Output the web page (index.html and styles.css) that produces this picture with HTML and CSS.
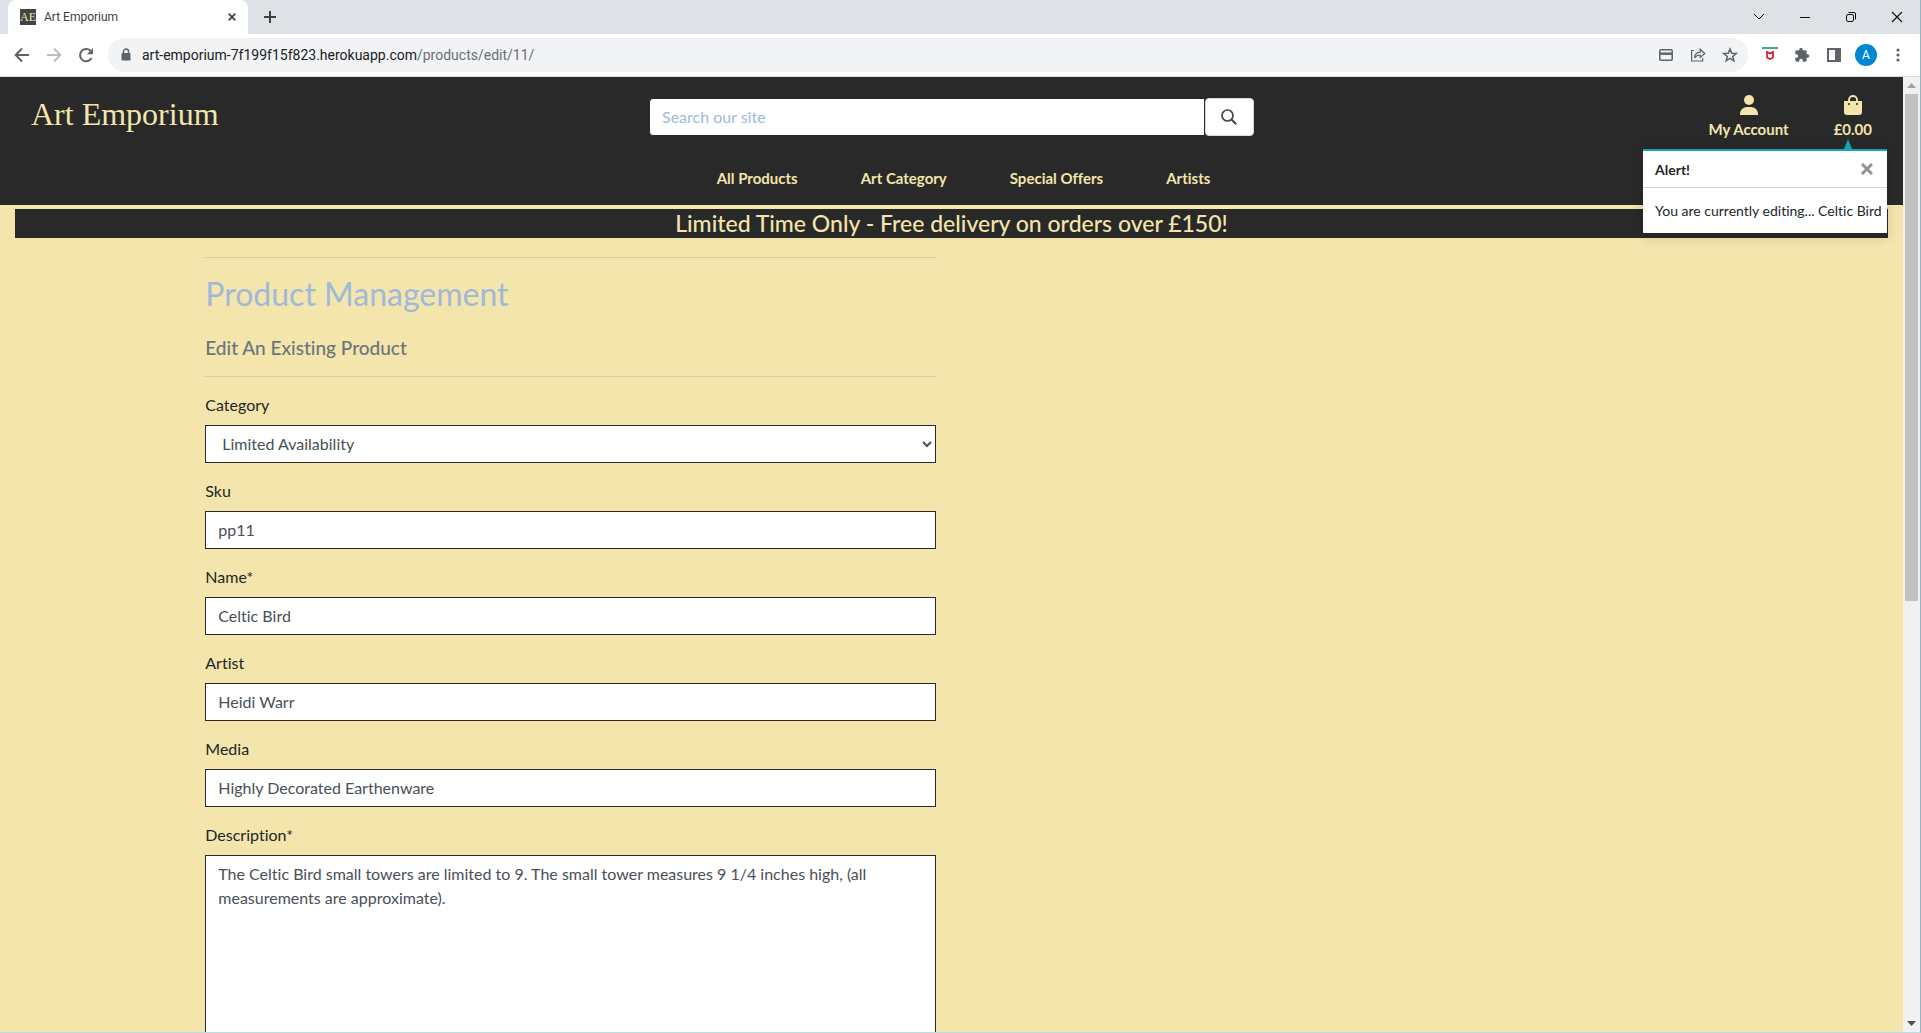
FILE: index.html
```html
<!DOCTYPE html>
<html lang="en">
<head>
<meta charset="utf-8">
<title>Art Emporium</title>
<link rel="stylesheet" href="styles.css">
</head>
<body>
<div class="browser">
  <div class="tab-strip">
    <div class="tab">
      <svg class="favicon" viewBox="0 0 16 16" aria-hidden="true"><rect width="16" height="16" fill="#444"/><text x="8" y="12" text-anchor="middle" class="favicon-text">AE</text></svg>
      <span class="tab-title">Art Emporium</span>
      <button class="icon-btn tab-close" aria-label="Close tab"><svg width="8" height="8" viewBox="0 0 8 8"><path d="M.7.7l6.6 6.6M7.3.7L.7 7.3" stroke="#3c4043" stroke-width="1.7"/></svg></button>
    </div>
    <button class="icon-btn new-tab" aria-label="New tab"><svg width="12" height="12" viewBox="0 0 12 12"><path d="M6 0v12M0 6h12" stroke="#3c4043" stroke-width="2"/></svg></button>
    <div class="window-controls">
      <button class="icon-btn" aria-label="Search tabs"><svg width="12" height="12" viewBox="0 0 12 12"><path d="M1 3l5 5 5-5" fill="none" stroke="#111"/></svg></button>
      <button class="icon-btn" aria-label="Minimise"><svg width="12" height="12" viewBox="0 0 12 12"><path d="M1 6.500h10" stroke="#111"/></svg></button>
      <button class="icon-btn" aria-label="Restore"><svg width="12" height="12" viewBox="0 0 12 12" fill="none" stroke="#111"><rect x="1.500" y="3.500" width="7" height="7" rx="1.500"/><path d="M3.500 1.500H9a1.500 1.500 0 0 1 1.500 1.500v5.500"/></svg></button>
      <button class="icon-btn" aria-label="Close"><svg width="12" height="12" viewBox="0 0 12 12"><path d="M1 1l10 10M11 1L1 11" stroke="#111" stroke-width="1.200"/></svg></button>
    </div>
  </div>
  <div class="toolbar">
    <button class="icon-btn" aria-label="Back"><svg width="16" height="16" viewBox="0 0 16 16" fill="none" stroke="#5f6368" stroke-width="2"><path d="M15 8H2M8 1.500L1.700 8 8 14.500"/></svg></button>
    <button class="icon-btn" aria-label="Forward"><svg width="16" height="16" viewBox="0 0 16 16" fill="none" stroke="#bbbdbf" stroke-width="2"><path d="M1 8h13M8 1.500L14.300 8 8 14.500"/></svg></button>
    <button class="icon-btn" aria-label="Reload"><svg width="16" height="16" viewBox="0 0 16 16"><path d="M13.500 11A6.100 6.100 0 1 1 12.400 3.800" fill="none" stroke="#5f6368" stroke-width="2"/><path d="M15 1v6.200H8.800z" fill="#5f6368"/></svg></button>
    <div class="address">
      <svg width="10" height="14" viewBox="0 0 10 14" aria-hidden="true"><rect x="0.500" y="5" width="9" height="7.500" rx="1" fill="#5f6368"/><path d="M2.500 5V3.500a2.500 2.500 0 0 1 5 0V5" fill="none" stroke="#5f6368" stroke-width="1.400"/></svg>
      <span class="url">art-emporium-7f199f15f823.herokuapp.com<span class="url-path">/products/edit/11/</span></span>
      <div class="address-icons">
        <button class="icon-btn" aria-label="Payment"><svg width="16" height="16" viewBox="0 0 16 16"><rect x="1.800" y="2.800" width="12.400" height="10.400" rx="1" fill="none" stroke="#5f6368" stroke-width="1.500"/><path d="M2 6.700h12" stroke="#5f6368" stroke-width="2.500"/></svg></button>
        <button class="icon-btn" aria-label="Share"><svg width="16" height="16" viewBox="0 0 16 16" fill="none" stroke="#5f6368" stroke-width="1.200"><path d="M4 3.500H1.600V14h11v-3M4.500 11c.3-4 2.300-5.700 5.700-5.900V2.200L14.800 6.500 10.200 10.500V8c-2.700 0-4.300.8-5.700 3z"/></svg></button>
        <button class="icon-btn" aria-label="Bookmark"><svg width="16" height="16" viewBox="0 0 16 16"><path d="M8 2l1.700 4.200 4.500.3-3.500 2.900 1.200 4.400L8 11.400l-3.900 2.400 1.200-4.400L1.800 6.500l4.500-.3z" fill="none" stroke="#5f6368" stroke-width="1.500"/></svg></button>
      </div>
    </div>
    <div class="extensions">
      <button class="icon-btn" aria-label="Web protection"><svg width="16" height="16" viewBox="0 0 16 16"><path d="M0 1h16" stroke="#3fa884" stroke-width="2"/><path d="M5 5v5.500l3 1.600 3-1.600V5L8 6.600z" fill="none" stroke="#c9202b" stroke-width="1.700"/></svg></button>
      <button class="icon-btn" aria-label="Extensions"><svg width="16" height="16" viewBox="0 0 24 24" fill="#5f6368"><path d="M20.500 11H19V7a2 2 0 0 0-2-2h-4V3.500a2.500 2.500 0 0 0-5 0V5H4a2 2 0 0 0-2 2v3.800h1.500a2.700 2.700 0 0 1 0 5.400H2V20a2 2 0 0 0 2 2h3.800v-1.500a2.700 2.700 0 0 1 5.400 0V22H17a2 2 0 0 0 2-2v-4h1.500a2.500 2.500 0 0 0 0-5z"/></svg></button>
      <button class="icon-btn" aria-label="Side panel"><svg width="16" height="16" viewBox="0 0 16 16"><path d="M1 1h14v14H1zM3 3v10h6V3z" fill="#5f6368" fill-rule="evenodd"/></svg></button>
      <button class="avatar" aria-label="Profile">A</button>
      <button class="icon-btn" aria-label="Menu"><svg width="16" height="16" viewBox="0 0 16 16" fill="#5f6368"><circle cx="8" cy="3" r="1.600"/><circle cx="8" cy="8" r="1.600"/><circle cx="8" cy="13" r="1.600"/></svg></button>
    </div>
  </div>
  <div class="viewport">
    <div class="page">
      <header class="site-header">
        <div class="header-top">
          <a class="logo" href="#">Art Emporium</a>
          <form class="search">
            <input type="text" placeholder="Search our site" aria-label="Search our site">
            <button type="button" aria-label="Search"><svg width="16" height="16" viewBox="0 0 16 16" fill="none" stroke="#3d4852"><circle cx="6.500" cy="6.500" r="5.500" stroke-width="1.700"/><path d="M10.300 10.300l4.900 4.900" stroke-width="2"/></svg></button>
          </form>
          <div class="account-links">
            <a href="#"><svg width="18" height="20" viewBox="0 0 18 20" fill="currentColor"><circle cx="9" cy="5" r="5"/><path d="M0 20v-1.500a7 6.500 0 0 1 7-6.500h4a7 6.500 0 0 1 7 6.500V20z"/></svg>My Account</a>
            <a class="bag-link" href="#"><svg width="18" height="20" viewBox="0 0 18 20"><path d="M5 8V5a4 4 0 0 1 8 0v3" fill="none" stroke="currentColor" stroke-width="1.900"/><path d="M0 6h18v11a3 3 0 0 1-3 3H3a3 3 0 0 1-3-3z" fill="currentColor"/><circle cx="5" cy="9" r="1" fill="#292929"/><circle cx="13" cy="9" r="1" fill="#292929"/></svg>£0.00</a>
          </div>
        </div>
        <nav class="main-nav">
          <a href="#">All Products</a><a href="#">Art Category</a><a href="#">Special Offers</a><a href="#">Artists</a>
        </nav>
      </header>
      <h4 class="banner">Limited Time Only - Free delivery on orders over £150!</h4>
      <section class="toast" role="alert">
        <div class="toast-head"><strong>Alert!</strong><button class="icon-btn" aria-label="Close alert"><svg width="12" height="12" viewBox="0 0 12 12"><path d="M1 1l10 10M11 1L1 11" stroke="#919395" stroke-width="3"/></svg></button></div>
        <p>You are currently editing... Celtic Bird</p>
      </section>
      <main class="container">
        <div class="column">
          <hr>
          <h2>Product Management</h2>
          <h5>Edit An Existing Product</h5>
          <hr>
          <form class="product-form">
            <div class="field"><label for="category">Category</label><select id="category"><option>Limited Availability</option></select></div>
            <div class="field"><label for="sku">Sku</label><input id="sku" type="text" value="pp11"></div>
            <div class="field"><label for="name">Name*</label><input id="name" type="text" value="Celtic Bird"></div>
            <div class="field"><label for="artist">Artist</label><input id="artist" type="text" value="Heidi Warr"></div>
            <div class="field"><label for="media">Media</label><input id="media" type="text" value="Highly Decorated Earthenware"></div>
            <div class="field"><label for="description">Description*</label><textarea id="description" rows="10">The Celtic Bird small towers are limited to 9. The small tower measures 9 1/4 inches high, (all measurements are approximate).</textarea></div>
          </form>
        </div>
      </main>
    </div>
    <div class="scrollbar" aria-hidden="true">
      <svg width="9" height="5" viewBox="0 0 9 5"><path d="M0 5l4.500-5L9 5z" fill="#a3a3a3"/></svg>
      <div class="track"><div class="thumb"></div></div>
      <svg width="9" height="5" viewBox="0 0 9 5"><path d="M0 0l4.500 5L9 0z" fill="#505050"/></svg>
    </div>
  </div>
</div>
</body>
</html>
```
FILE: styles.css
```css
* { box-sizing: border-box; }

body {
  margin: 0;
  font: 16px/24px Lato, "Noto Sans", sans-serif;
  font-variant-ligatures: none;
  color: #212529;
}

a { color: inherit; text-decoration: none; }

.browser {
  height: 100vh;
  display: flex;
  flex-direction: column;
  overflow: hidden;
  border-right: 1px solid #8fb7c4;
  border-bottom: 1px solid #b9dfe4;
}

.icon-btn {
  display: flex;
  align-items: center;
  justify-content: center;
  padding: 0;
  border: 0;
  background: none;
}

/* Browser chrome */
.tab-strip {
  flex: none;
  height: 34px;
  display: flex;
  align-items: center;
  padding-left: 8px;
  background: #dee1e6;
}

.tab {
  width: 240px;
  height: 34px;
  display: flex;
  align-items: center;
  gap: 8px;
  padding: 0 12px;
  border-radius: 8px 8px 0 0;
  background: #fff;
}

.favicon { width: 16px; height: 16px; }
.favicon-text { font: 12px "Liberation Serif", serif; fill: #f3e5ab; }
.tab-title { flex: 1; font: 12px/16px Roboto, sans-serif; color: #3c4043; }
.new-tab { margin-left: 16px; }

.window-controls {
  margin-left: auto;
  display: flex;
  gap: 34px;
  padding-right: 17px;
}

.toolbar {
  flex: none;
  height: 43px;
  display: flex;
  align-items: center;
  gap: 16px;
  padding: 0 14px;
  border-bottom: 1px solid #dadce0;
  background: #fff;
}

.address {
  flex: 1;
  height: 34px;
  display: flex;
  align-items: center;
  gap: 11px;
  margin-left: -2px;
  padding: 0 10px 0 13px;
  border-radius: 17px;
  background: #f1f3f4;
}

.url { font: 14px/20px Roboto, sans-serif; color: #202124; }
.url-path { color: #6b6f74; }
.address-icons { margin-left: auto; display: flex; gap: 16px; }
.extensions { display: flex; align-items: center; gap: 16px; margin-left: -2px; }

.avatar {
  width: 22px;
  height: 22px;
  margin: 0 -3px;
  padding: 0;
  border: 0;
  border-radius: 50%;
  background: #0288d1;
  color: #fff;
  font: 12px/22px Roboto, sans-serif;
}

/* Site */
.viewport { flex: 1; min-height: 0; display: flex; }

.page {
  flex: 1;
  position: relative;
  overflow: hidden;
  background: #f3e5ab;
}

.site-header {
  height: 128px;
  background: #292929;
  color: #f3e5ab;
}

.header-top {
  display: grid;
  grid-template-columns: 1fr 605px 1fr;
  padding: 13px 31px 0;
}

.logo { font: 32px/48px "Liberation Serif", serif; }

.search { display: flex; height: 38px; margin-top: 8px; }

.search input {
  flex: 1;
  min-width: 0;
  padding: 6px 12px;
  border: 1px solid #292929;
  border-radius: 4px 0 0 4px;
  font: inherit;
}

.search input::placeholder { color: #a0b9da; opacity: 1; }

.search button {
  width: 49px;
  display: flex;
  align-items: center;
  justify-content: center;
  padding: 0 7px 0 6px;
  border: 1px solid #d5dade;
  border-radius: 4px;
  background: #fff;
}

.account-links {
  display: flex;
  justify-content: flex-end;
  gap: 45px;
  padding-top: 5px;
  font-size: 15px;
  font-weight: 700;
}

.account-links a { display: flex; flex-direction: column; align-items: center; gap: 2px; }

.main-nav {
  display: flex;
  justify-content: center;
  gap: 63px;
  padding: 25px 0 0 24px;
  font-size: 15px;
  font-weight: 700;
}

.banner {
  margin: 4px 15px 0;
  background: #292929;
  color: #f3e5ab;
  font-size: 23px;
  line-height: 29px;
  font-weight: 500;
  text-align: center;
}

.toast {
  position: absolute;
  top: 72px;
  right: 16px;
  width: 244px;
  border-top: 2px solid #17a2b8;
  background: #fff;
  box-shadow: 0 4px 12px rgba(0, 0, 0, .15);
  font-size: 14px;
  line-height: 21px;
}

.toast::before {
  content: "";
  position: absolute;
  top: -12px;
  right: 35px;
  border: 4px solid transparent;
  border-top: 0;
  border-bottom: 10px solid #17a2b8;
}

.toast-head {
  display: flex;
  align-items: center;
  justify-content: space-between;
  height: 37px;
  padding: 0 14px 0 12px;
  border-bottom: 1px solid #d3d3d3;
}

.toast p { margin: 0; padding: 12px; white-space: nowrap; }

.container { width: 80%; margin: 0 auto; }
.column { width: 50%; padding: 3px 15px 0; }

hr {
  margin: 16px 0;
  border: 0;
  border-top: 1px solid rgba(0, 0, 0, .1);
}

h2 { margin: 0; font-size: 32px; line-height: 40px; font-weight: 400; color: #a0b9da; }
h5 { margin: 22px 0 16px; font-size: 19px; line-height: 24px; font-weight: 500; color: #6c757d; }

.field { display: flex; flex-direction: column; gap: 8px; margin-bottom: 16px; }

.field input,
.field select,
.field textarea {
  width: 100%;
  padding: 5px 12px 7px;
  border: 1px solid #292929;
  border-radius: 0;
  background: #fff;
  color: #495057;
  font: inherit;
}

.field input,
.field select { height: 38px; }
.field textarea { display: block; padding: 6px 12px; resize: none; }

/* Scrollbar */
.scrollbar {
  width: 17px;
  display: flex;
  flex-direction: column;
  align-items: center;
  padding: 6px 2px;
  background: #f1f1f1;
}

.track { flex: 1; width: 100%; padding: 6px 0; }
.thumb { height: 55%; background: #c1c1c1; }
```
